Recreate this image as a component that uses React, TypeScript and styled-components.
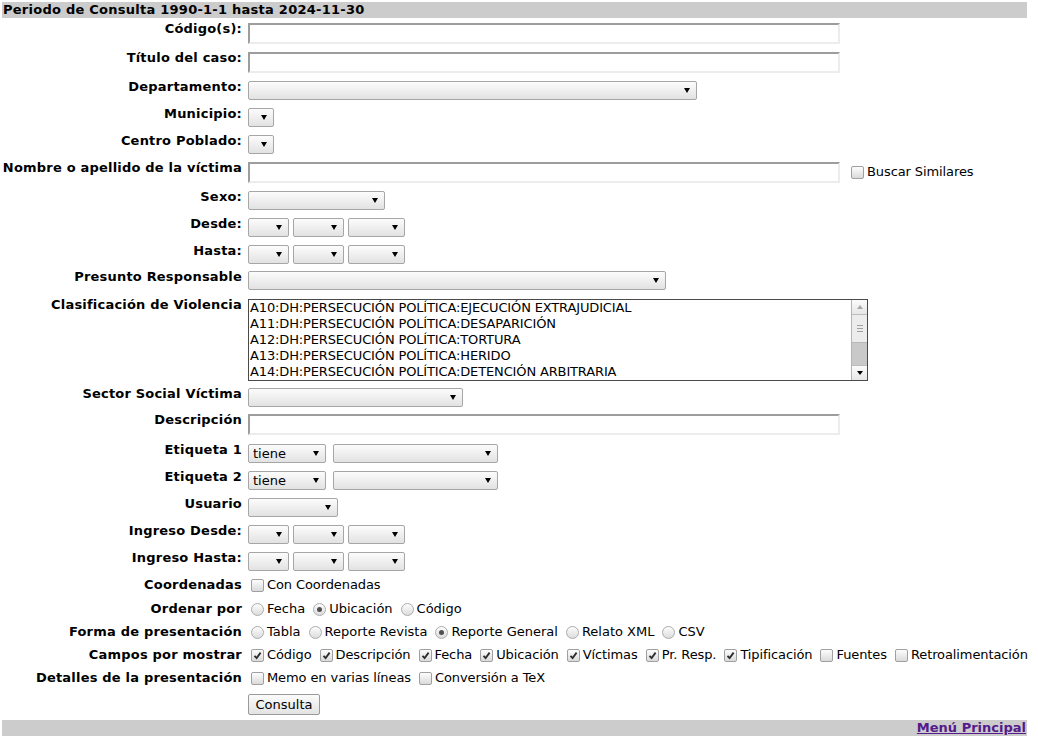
import React from "react";
import styled, { createGlobalStyle } from "styled-components";

const GlobalStyle = createGlobalStyle`
  html, body { margin: 0; padding: 0; background: #fff; }
  body {
    font-family: "DejaVu Sans", Verdana, sans-serif;
    font-size: 13px;
    color: #000;
  }
`;

const Page = styled.div`
  width: 1025px;
  margin: 2px 0 0 2px;
`;

const Bar = styled.div<{ $align?: "left" | "right" }>`
  background: #cccccc;
  height: 16px;
  line-height: 16px;
  font-weight: bold;
  padding: 0 1px;
  text-align: ${(p) => p.$align ?? "left"};
  white-space: nowrap;
`;

const Title = styled.span`
  letter-spacing: 0.25px;
`;

const MenuLink = styled.a`
  color: #551a8b;
  font-weight: bold;
  text-decoration: underline;
`;

const Form = styled.form`
  display: flex;
  flex-direction: column;
  margin: 3px 0 0;
`;

const Row = styled.div<{ $h: number }>`
  display: grid;
  grid-template-columns: 241px 1fr;
  column-gap: 5px;
  height: ${(p) => p.$h}px;
  align-items: start;
`;

const Label = styled.div`
  text-align: right;
  font-weight: bold;
  line-height: 15px;
  letter-spacing: 0.2px;
  white-space: nowrap;
  padding-right: 1px;
`;

const Field = styled.div<{ $gap?: number; $pt?: number }>`
  display: flex;
  align-items: flex-start;
  gap: ${(p) => p.$gap ?? 4}px;
  padding-top: ${(p) => p.$pt ?? 2}px;
  white-space: nowrap;
`;

const TextInput = styled.input`
  box-sizing: border-box;
  width: 592px;
  height: 21px;
  margin: 0;
  padding: 1px 3px;
  border-style: solid;
  border-width: 2px;
  border-color: #9d9d9d #ececec #ececec #9d9d9d;
  background: #fff;
  font: inherit;
  outline: none;
`;

const SelectBox = styled.div<{ $w: number }>`
  box-sizing: border-box;
  width: ${(p) => p.$w}px;
  height: 19px;
  display: flex;
  align-items: center;
  padding: 0 6px 0 4px;
  border: 1px solid #a6a6a6;
  border-radius: 2px;
  background: linear-gradient(#fcfcfc, #e2e2e2);
  line-height: 17px;
  flex: none;
`;

const SelectText = styled.span`
  flex: 1;
  overflow: hidden;
`;

const Arrow = styled.span`
  width: 0;
  height: 0;
  border-left: 3px solid transparent;
  border-right: 3px solid transparent;
  border-top: 5px solid #000;
  flex: none;
  margin-top: -1px;
`;

const Select = ({ w, value }: { w: number; value?: string }) => (
  <SelectBox $w={w}>
    <SelectText>{value ?? ""}</SelectText>
    <Arrow />
  </SelectBox>
);

const OptionGroup = styled.div`
  display: flex;
  align-items: flex-start;
  gap: 5px;
`;

const Option = styled.label<{ $mt?: number; $ls: number }>`
  display: inline-flex;
  align-items: flex-start;
  gap: 3px;
  line-height: 15px;
  letter-spacing: ${(p) => p.$ls}px;
  margin-top: ${(p) => p.$mt ?? 0}px;
  white-space: nowrap;
`;

const CheckBox = styled.span`
  box-sizing: border-box;
  width: 13px;
  height: 13px;
  margin: 2px 0 0 3px;
  border: 1px solid #a0a0a0;
  border-radius: 2px;
  background: linear-gradient(#fdfdfd, #dadada);
  display: inline-flex;
  align-items: center;
  justify-content: center;
  flex: none;
`;

const RadioCircle = styled.span`
  box-sizing: border-box;
  width: 13px;
  height: 13px;
  margin: 2px 0 0 3px;
  border: 1px solid #acacac;
  border-radius: 50%;
  background: linear-gradient(#fdfdfd, #dcdcdc);
  display: inline-flex;
  align-items: center;
  justify-content: center;
  flex: none;
`;

const RadioDot = styled.span`
  width: 5px;
  height: 5px;
  border-radius: 50%;
  background: #505050;
`;

const Check = ({ label, checked, mt }: { label: string; checked?: boolean; mt?: number }) => (
  <Option $mt={mt} $ls={-0.1}>
    <CheckBox>
      {checked && (
        <svg width="9" height="9" viewBox="0 0 9 9">
          <path d="M1.5 4.8 L3.6 7 L7.6 1.6" fill="none" stroke="#2b2b2b" strokeWidth="1.8" />
        </svg>
      )}
    </CheckBox>
    <span>{label}</span>
  </Option>
);

const Radio = ({ label, checked }: { label: string; checked?: boolean }) => (
  <Option $ls={0}>
    <RadioCircle>{checked && <RadioDot />}</RadioCircle>
    <span>{label}</span>
  </Option>
);

const ListBox = styled.div`
  box-sizing: border-box;
  width: 620px;
  height: 82px;
  border: 1px solid #4a4a4a;
  display: flex;
  background: #fff;
  overflow: hidden;
`;

const ListItems = styled.div`
  flex: 1;
  overflow: hidden;
  padding-left: 1px;
`;

const ListItem = styled.div`
  height: 16px;
  line-height: 16px;
  letter-spacing: -0.14px;
  white-space: nowrap;
`;

const ScrollBar = styled.div`
  width: 15px;
  display: flex;
  flex-direction: column;
  border-left: 1px solid #b4b4b4;
  background: #c9c9c9;
`;

const ScrollButton = styled.div`
  height: 14px;
  display: flex;
  align-items: center;
  justify-content: center;
  background: linear-gradient(#fbfbfb, #e6e6e6);
  border-bottom: 1px solid #bdbdbd;
  &:last-child {
    border-bottom: none;
    border-top: 1px solid #bdbdbd;
    margin-top: auto;
  }
`;

const Thumb = styled.div`
  height: 27px;
  background: #ececec;
  border-bottom: 1px solid #b8b8b8;
  display: flex;
  flex-direction: column;
  align-items: center;
  justify-content: center;
  gap: 2px;
`;

const Grip = styled.span`
  width: 6px;
  height: 1px;
  background: #a0a0a0;
`;

const ScrollArrow = styled.span<{ $up?: boolean; $color: string }>`
  width: 0;
  height: 0;
  border-left: 3.5px solid transparent;
  border-right: 3.5px solid transparent;
  ${(p) => (p.$up ? `border-bottom: 4px solid ${p.$color};` : `border-top: 4px solid ${p.$color};`)}
`;

const Button = styled.button`
  box-sizing: border-box;
  width: 72px;
  height: 21px;
  margin: 1px 0 0;
  padding: 0;
  border: 1px solid #9a9a9a;
  border-radius: 2px;
  background: linear-gradient(#fbfbfb, #e3e3e3);
  font: inherit;
  color: #000;
  line-height: 19px;
`;

const violencia = [
  "A10:DH:PERSECUCIÓN POLÍTICA:EJECUCIÓN EXTRAJUDICIAL",
  "A11:DH:PERSECUCIÓN POLÍTICA:DESAPARICIÓN",
  "A12:DH:PERSECUCIÓN POLÍTICA:TORTURA",
  "A13:DH:PERSECUCIÓN POLÍTICA:HERIDO",
  "A14:DH:PERSECUCIÓN POLÍTICA:DETENCIÓN ARBITRARIA",
];

const DateSelects = () => (
  <>
    <Select w={41} />
    <Select w={51} />
    <Select w={57} />
  </>
);

export default function App() {
  return (
    <Page>
      <GlobalStyle />
      <Bar>
        <Title>Periodo de Consulta 1990-1-1 hasta 2024-11-30</Title>
      </Bar>
      <Form onSubmit={(e) => e.preventDefault()}>
        <Row $h={29}>
          <Label>Código(s):</Label>
          <Field><TextInput /></Field>
        </Row>
        <Row $h={29}>
          <Label>Título del caso:</Label>
          <Field><TextInput /></Field>
        </Row>
        <Row $h={27}>
          <Label>Departamento:</Label>
          <Field><Select w={449} /></Field>
        </Row>
        <Row $h={27}>
          <Label>Municipio:</Label>
          <Field><Select w={26} /></Field>
        </Row>
        <Row $h={27}>
          <Label>Centro Poblado:</Label>
          <Field><Select w={26} /></Field>
        </Row>
        <Row $h={29}>
          <Label>Nombre o apellido de la víctima</Label>
          <Field $gap={8}>
            <TextInput />
            <Check label="Buscar Similares" mt={2} />
          </Field>
        </Row>
        <Row $h={27}>
          <Label>Sexo:</Label>
          <Field><Select w={137} /></Field>
        </Row>
        <Row $h={27}>
          <Label>Desde:</Label>
          <Field><DateSelects /></Field>
        </Row>
        <Row $h={26}>
          <Label>Hasta:</Label>
          <Field><DateSelects /></Field>
        </Row>
        <Row $h={28}>
          <Label>Presunto Responsable</Label>
          <Field><Select w={418} /></Field>
        </Row>
        <Row $h={89}>
          <Label>Clasificación de Violencia</Label>
          <Field>
            <ListBox>
              <ListItems>
                {violencia.map((v) => (
                  <ListItem key={v}>{v}</ListItem>
                ))}
              </ListItems>
              <ScrollBar>
                <ScrollButton><ScrollArrow $up $color="#a8a8a8" /></ScrollButton>
                <Thumb><Grip /><Grip /><Grip /></Thumb>
                <ScrollButton><ScrollArrow $color="#000" /></ScrollButton>
              </ScrollBar>
            </ListBox>
          </Field>
        </Row>
        <Row $h={26}>
          <Label>Sector Social Víctima</Label>
          <Field><Select w={215} /></Field>
        </Row>
        <Row $h={30}>
          <Label>Descripción</Label>
          <Field><TextInput /></Field>
        </Row>
        <Row $h={27}>
          <Label>Etiqueta 1</Label>
          <Field $gap={7}>
            <Select w={78} value="tiene" />
            <Select w={165} />
          </Field>
        </Row>
        <Row $h={27}>
          <Label>Etiqueta 2</Label>
          <Field $gap={7}>
            <Select w={78} value="tiene" />
            <Select w={165} />
          </Field>
        </Row>
        <Row $h={27}>
          <Label>Usuario</Label>
          <Field><Select w={90} /></Field>
        </Row>
        <Row $h={27}>
          <Label>Ingreso Desde:</Label>
          <Field><DateSelects /></Field>
        </Row>
        <Row $h={27}>
          <Label>Ingreso Hasta:</Label>
          <Field><DateSelects /></Field>
        </Row>
        <Row $h={24}>
          <Label>Coordenadas</Label>
          <Field $pt={0}>
            <Check label="Con Coordenadas" />
          </Field>
        </Row>
        <Row $h={23}>
          <Label>Ordenar por</Label>
          <Field $pt={0}>
            <OptionGroup>
              <Radio label="Fecha" />
              <Radio label="Ubicación" checked />
              <Radio label="Código" />
            </OptionGroup>
          </Field>
        </Row>
        <Row $h={23}>
          <Label>Forma de presentación</Label>
          <Field $pt={0}>
            <OptionGroup>
              <Radio label="Tabla" />
              <Radio label="Reporte Revista" />
              <Radio label="Reporte General" checked />
              <Radio label="Relato XML" />
              <Radio label="CSV" />
            </OptionGroup>
          </Field>
        </Row>
        <Row $h={23}>
          <Label>Campos por mostrar</Label>
          <Field $pt={0}>
            <OptionGroup>
              <Check label="Código" checked />
              <Check label="Descripción" checked />
              <Check label="Fecha" checked />
              <Check label="Ubicación" checked />
              <Check label="Víctimas" checked />
              <Check label="Pr. Resp." checked />
              <Check label="Tipificación" checked />
              <Check label="Fuentes" />
              <Check label="Retroalimentación" />
            </OptionGroup>
          </Field>
        </Row>
        <Row $h={23}>
          <Label>Detalles de la presentación</Label>
          <Field $pt={0}>
            <OptionGroup>
              <Check label="Memo en varias líneas" />
              <Check label="Conversión a TeX" />
            </OptionGroup>
          </Field>
        </Row>
        <Row $h={27}>
          <span />
          <Field $pt={0}>
            <Button type="submit">Consulta</Button>
          </Field>
        </Row>
      </Form>
      <Bar $align="right">
        <MenuLink href="#">Menú Principal</MenuLink>
      </Bar>
    </Page>
  );
}
